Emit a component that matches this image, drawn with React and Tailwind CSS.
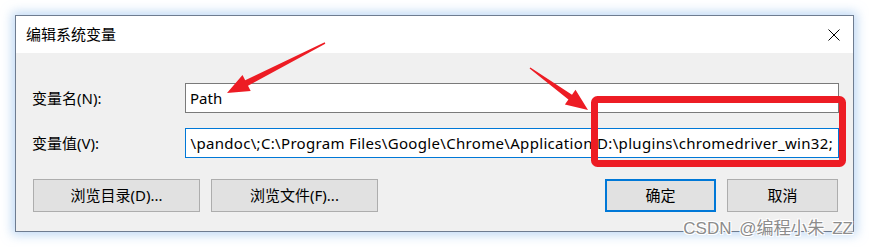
import React from 'react';

const font = "font-['Noto_Sans','Noto_Sans_CJK_SC',sans-serif]";

function DialogButton({ children, primary }) {
    return (
        <button
            className={
                'h-[33px] bg-[#e1e1e1] text-[15px] text-black ' +
                (primary ? 'border-2 border-[#0078d7]' : 'border border-[#adadad]')
            }
        >
            {children}
        </button>
    );
}

function Annotations() {
    return (
        <svg className="absolute left-0 top-0 pointer-events-none" width="869" height="247" viewBox="0 0 869 247">
            {/* arrow to the name field */}
            <polygon
                fill="#ed1c24"
                points="324.7,42.3 245.2,80.3 242.5,75 227,93 250.7,91 248,85.7 325.3,43.7"
            />
            {/* arrow to the value field */}
            <polygon
                fill="#ed1c24"
                points="529.6,68.6 568.4,99.5 564.9,104.4 588,110 575.5,89.8 572,94.7 530.4,67.4"
            />
            <rect x="594.5" y="99.5" width="248" height="64" rx="3" fill="none" stroke="#ed1c24" strokeWidth="7" />
        </svg>
    );
}

export default function App() {
    return (
        <div className={`relative w-[869px] h-[247px] bg-white p-[15px] ${font}`}>
            <div className="w-[839px] h-[217px] border border-[#6e7c90] bg-[#f0f0f0] shadow-[0_0_10px_3px_rgba(140,185,235,0.55)] flex flex-col">
                <div className="h-[37px] bg-white flex items-center justify-between pl-[10px] pr-[13px]">
                    <span className="text-[15px] text-black">编辑系统变量</span>
                    <svg width="12" height="12" viewBox="0 0 12 12">
                        <path d="M0.5 0.5 L11.5 11.5 M11.5 0.5 L0.5 11.5" stroke="#000" strokeWidth="1" />
                    </svg>
                </div>

                <div className="flex-1 flex flex-col pt-[30px] pl-[16px] pr-[14px]">
                    <div className="flex items-center h-[30px]">
                        <label className="w-[153px] text-[15px] text-black">变量名(N):</label>
                        <div className="flex-1 h-[30px] bg-white border border-[#7a7a7a] flex items-center pl-[4px] text-[15px] text-black">
                            Path
                        </div>
                    </div>

                    <div className="flex items-center h-[30px] mt-[15px]">
                        <label className="w-[153px] text-[15px] text-black">变量值(V):</label>
                        <div className="flex-1 h-[30px] bg-white border border-[#0078d7] flex items-center justify-end overflow-hidden pr-[5px] text-[15px] tracking-[0.32px] text-black whitespace-nowrap">
                            {'\\pandoc\\;C:\\Program Files\\Google\\Chrome\\Application;D:\\plugins\\chromedriver_win32;'}
                        </div>
                    </div>

                    <div className="flex mt-[21px] pl-[1px] pr-[1px]">
                        <div className="flex gap-[11px]">
                            <div className="w-[167px] flex flex-col"><DialogButton>浏览目录(D)...</DialogButton></div>
                            <div className="w-[167px] flex flex-col"><DialogButton>浏览文件(F)...</DialogButton></div>
                        </div>
                        <div className="flex gap-[11px] ml-auto">
                            <div className="w-[111px] flex flex-col"><DialogButton primary>确定</DialogButton></div>
                            <div className="w-[111px] flex flex-col"><DialogButton>取消</DialogButton></div>
                        </div>
                    </div>
                </div>
            </div>

            <Annotations />

            <div className="absolute right-[16px] bottom-[10px] text-[17px] leading-none font-['Liberation_Sans','Noto_Sans_CJK_SC',sans-serif] text-[#8c8c8c] [word-spacing:3px] [text-shadow:1px_1px_0_#fff,-1px_-1px_0_#fff,1px_-1px_0_#fff,-1px_1px_0_#fff]">
                CSDN @编程小朱 ZZ
            </div>
        </div>
    );
}
